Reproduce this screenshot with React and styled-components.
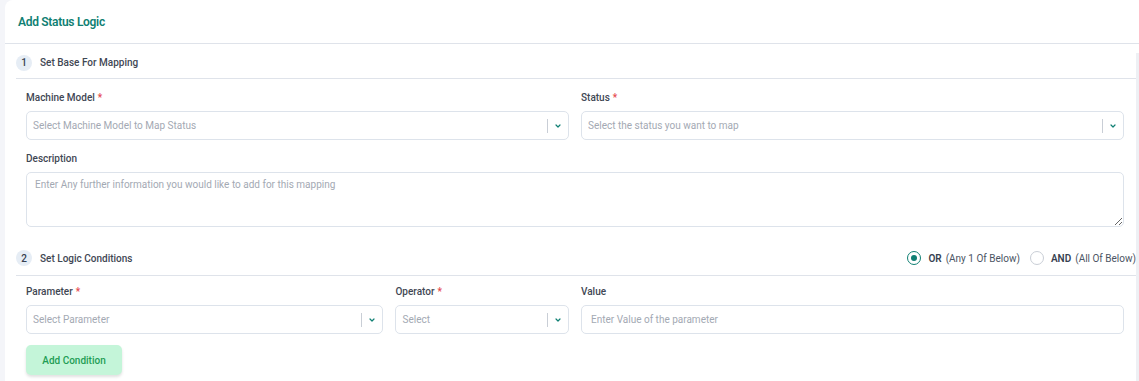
import styled, { createGlobalStyle } from "styled-components";

const GlobalStyle = createGlobalStyle`
  * { box-sizing: border-box; }
  body {
    margin: 0;
    background: #f4f5f9;
    font-family: Roboto, Inter, "Noto Sans", sans-serif;
    overflow: hidden;
  }
`;

const Page = styled.div`
  padding-left: 5px;
  height: 381px;
`;

const Card = styled.div`
  background: #ffffff;
  border-top-left-radius: 8px;
  height: 100%;
  display: flex;
  flex-direction: column;
`;

const Header = styled.div`
  height: 44px;
  padding-left: 13px;
  display: flex;
  align-items: center;
  border-bottom: 1px solid #dfe3ea;
`;

const Title = styled.h1`
  margin: 0;
  font-size: 12px;
  font-weight: 600;
  color: #0f7f73;
  letter-spacing: -0.3px;
`;

const Body = styled.div`
  flex: 1;
  display: flex;
  padding-left: 11px;
`;

const Content = styled.div`
  flex: 1;
`;

const Track = styled.div`
  width: 3px;
  margin-top: 9px;
  background: #eef0f4;
`;

const SectionHead = styled.div`
  display: flex;
  align-items: center;
  height: ${(p) => p.$h}px;
  padding-top: ${(p) => p.$pt}px;
  margin-top: ${(p) => p.$mt || 0}px;
  border-bottom: 1px solid #dfe3ea;
`;

const StepNum = styled.span`
  width: 16px;
  height: 16px;
  border-radius: 50%;
  background: #e6edf5;
  color: #374151;
  font-size: 10px;
  font-weight: 500;
  display: flex;
  align-items: center;
  justify-content: center;
  margin-right: 8px;
`;

const SectionTitle = styled.span`
  font-size: 10px;
  font-weight: 500;
  color: #3f4754;
  flex: 1;
`;

const Fields = styled.div`
  padding: 0 12px 0 10px;
`;

const Row = styled.div`
  display: grid;
  grid-template-columns: ${(p) => p.$cols || "1fr 1fr"};
  gap: 12px;
  margin-top: ${(p) => p.$mt}px;
`;

const Field = styled.div`
  display: flex;
  flex-direction: column;
  min-width: 0;
`;

const Label = styled.label`
  font-size: 10px;
  line-height: 14px;
  font-weight: 500;
  color: #3f4754;
  margin-top: 1px;
  margin-bottom: 6px;
`;

const Req = styled.span`
  color: #e5484d;
  margin-left: 3px;
`;

const SelectBox = styled.div`
  height: 29px;
  border: 1px solid #dde3eb;
  border-radius: 5px;
  display: flex;
  align-items: center;
  padding-left: 6px;
  background: #fff;
`;

const Placeholder = styled.span`
  flex: 1;
  font-size: 10px;
  color: #a3a9b3;
  white-space: nowrap;
  overflow: hidden;
`;

const Sep = styled.span`
  width: 1px;
  height: 14px;
  background: #c9ced6;
`;

const Chevron = styled.span`
  width: 20px;
  display: flex;
  justify-content: center;
  align-items: center;
`;

const TextArea = styled.textarea`
  height: 55px;
  border: 1px solid #dde3eb;
  border-radius: 5px;
  padding: 6px 8px;
  font-family: inherit;
  font-size: 10px;
  color: #374151;
  outline: none;
  &::placeholder { color: #a3a9b3; }
`;

const TextInput = styled.input`
  height: 29px;
  border: 1px solid #dde3eb;
  border-radius: 5px;
  padding: 0 9px;
  font-family: inherit;
  font-size: 10px;
  outline: none;
  &::placeholder { color: #a3a9b3; }
`;

const Radios = styled.div`
  display: flex;
  align-items: center;
  font-size: 10px;
`;

const RadioItem = styled.label`
  display: flex;
  align-items: center;
  margin-left: ${(p) => p.$ml || 0}px;
`;

const Dot = styled.span`
  width: 14px;
  height: 14px;
  border-radius: 50%;
  border: 1.5px solid ${(p) => (p.$on ? "#0f7f73" : "#c9ced6")};
  display: flex;
  align-items: center;
  justify-content: center;
  margin-right: 7px;
  &::after {
    content: "";
    width: 6px;
    height: 6px;
    border-radius: 50%;
    background: ${(p) => (p.$on ? "#0f7f73" : "transparent")};
  }
`;

const RadioMain = styled.b`
  font-weight: 600;
  color: #374151;
  margin-right: 4px;
`;

const RadioHint = styled.span`
  color: #4b5563;
`;

const AddButton = styled.button`
  margin-top: 11px;
  height: 30px;
  width: 96px;
  border: none;
  border-radius: 5px;
  background: #c4f5d9;
  color: #1f9d55;
  font-family: inherit;
  font-size: 10px;
  font-weight: 500;
  box-shadow: 0 2px 3px rgba(0, 0, 0, 0.12);
  cursor: pointer;
`;

const ChevronIcon = () => (
  <svg width="8" height="8" viewBox="0 0 8 8">
    <path d="M2 3 L4 5 L6 3" fill="none" stroke="#0f7f73" strokeWidth="1.2" strokeLinecap="round" strokeLinejoin="round" />
  </svg>
);

const Select = ({ placeholder }) => (
  <SelectBox>
    <Placeholder>{placeholder}</Placeholder>
    <Sep />
    <Chevron>
      <ChevronIcon />
    </Chevron>
  </SelectBox>
);

const App = () => {
  return (
    <Page>
      <GlobalStyle />
      <Card>
        <Header>
          <Title>Add Status Logic</Title>
        </Header>
        <Body>
          <Content>
            <SectionHead $h={35} $pt={3}>
              <StepNum>1</StepNum>
              <SectionTitle>Set Base For Mapping</SectionTitle>
            </SectionHead>
            <Fields>
              <Row $mt={11}>
                <Field>
                  <Label>Machine Model<Req>*</Req></Label>
                  <Select placeholder="Select Machine Model to Map Status" />
                </Field>
                <Field>
                  <Label>Status<Req>*</Req></Label>
                  <Select placeholder="Select the status you want to map" />
                </Field>
              </Row>
              <Row $mt={11} $cols="1fr">
                <Field>
                  <Label>Description</Label>
                  <TextArea placeholder="Enter Any further information you would like to add for this mapping" />
                </Field>
              </Row>
            </Fields>
            <SectionHead $h={35} $pt={0} $mt={14}>
              <StepNum>2</StepNum>
              <SectionTitle>Set Logic Conditions</SectionTitle>
              <Radios>
                <RadioItem>
                  <Dot $on />
                  <RadioMain>OR</RadioMain>
                  <RadioHint>(Any 1 Of Below)</RadioHint>
                </RadioItem>
                <RadioItem $ml={10}>
                  <Dot />
                  <RadioMain>AND</RadioMain>
                  <RadioHint>(All Of Below)</RadioHint>
                </RadioItem>
              </Radios>
            </SectionHead>
            <Fields>
              <Row $mt={8}>
                <Row $mt={0} $cols="2.06fr 1fr">
                  <Field>
                    <Label>Parameter<Req>*</Req></Label>
                    <Select placeholder="Select Parameter" />
                  </Field>
                  <Field>
                    <Label>Operator<Req>*</Req></Label>
                    <Select placeholder="Select" />
                  </Field>
                </Row>
                <Field>
                  <Label>Value</Label>
                  <TextInput placeholder="Enter Value of the parameter" />
                </Field>
              </Row>
              <AddButton>Add Condition</AddButton>
            </Fields>
          </Content>
          <Track />
        </Body>
      </Card>
    </Page>
  );
};

export default App;
